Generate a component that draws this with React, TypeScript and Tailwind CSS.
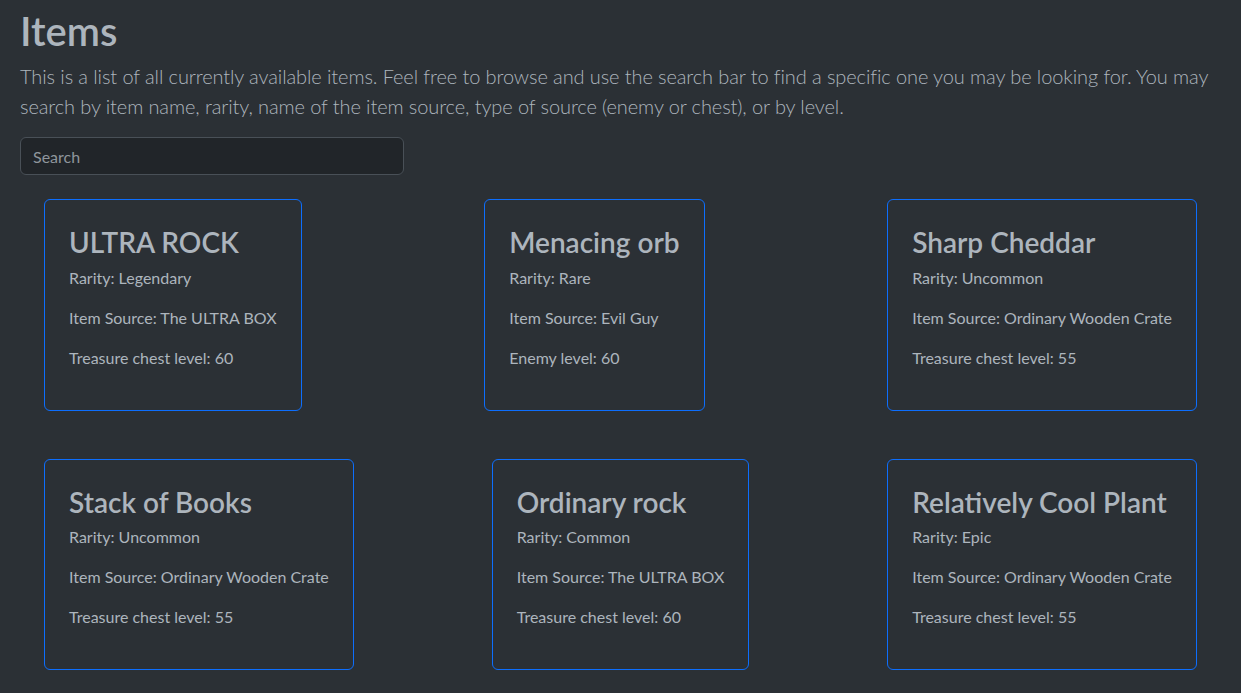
const ITEMS = [
  { name: 'ULTRA ROCK', rarity: 'Legendary', source: 'The ULTRA BOX', kind: 'Treasure chest', level: 60 },
  { name: 'Menacing orb', rarity: 'Rare', source: 'Evil Guy', kind: 'Enemy', level: 60 },
  { name: 'Sharp Cheddar', rarity: 'Uncommon', source: 'Ordinary Wooden Crate', kind: 'Treasure chest', level: 55 },
  { name: 'Stack of Books', rarity: 'Uncommon', source: 'Ordinary Wooden Crate', kind: 'Treasure chest', level: 55 },
  { name: 'Ordinary rock', rarity: 'Common', source: 'The ULTRA BOX', kind: 'Treasure chest', level: 60 },
  { name: 'Relatively Cool Plant', rarity: 'Epic', source: 'Ordinary Wooden Crate', kind: 'Treasure chest', level: 55 },
];

type Item = (typeof ITEMS)[number];

function ItemCard({ item }: { item: Item }) {
  return (
    <div className="m-6 rounded-md border border-[#0d6efd] p-6">
      <h3 className="mt-[2px] mb-[6px] text-[28px] font-semibold leading-[1.2] text-[#adb5bd]">{item.name}</h3>
      <p className="mb-4 text-base leading-6">Rarity: {item.rarity}</p>
      <p className="mb-4 text-base leading-6">Item Source: {item.source}</p>
      <p className="mb-4 text-base leading-6">
        {item.kind} level: {item.level}
      </p>
    </div>
  );
}

export default function App() {
  const rows = [ITEMS.slice(0, 3), ITEMS.slice(3, 6)];

  return (
    <div
      className="min-h-screen bg-[#2b3035] px-5 pt-[7px] text-[#adb5bd]"
      style={{ fontFamily: '"Segoe UI", Lato, sans-serif' }}
    >
      <h1 className="mb-[6px] text-[40px] font-semibold leading-[1.2] text-[#adb5bd]">Items</h1>
      <p className="mb-4 whitespace-nowrap text-xl font-light leading-[30px] tracking-[-0.1px]">
        This is a list of all currently available items. Feel free to browse and use the search bar to find a specific
        one you may be looking for. You may
        <br />
        search by item name, rarity, name of the item source, type of source (enemy or chest), or by level.
      </p>
      <input
        className="h-[38px] w-[384px] rounded-md border border-[#495057] bg-[#212529] px-3 text-base text-[#dee2e6] placeholder-[#8f969c] outline-none"
        placeholder="Search"
      />

      {rows.map((row, i) => (
        <div key={i} className="flex items-start justify-between">
          {row.map(item => (
            <ItemCard key={item.name} item={item} />
          ))}
        </div>
      ))}
    </div>
  );
}
